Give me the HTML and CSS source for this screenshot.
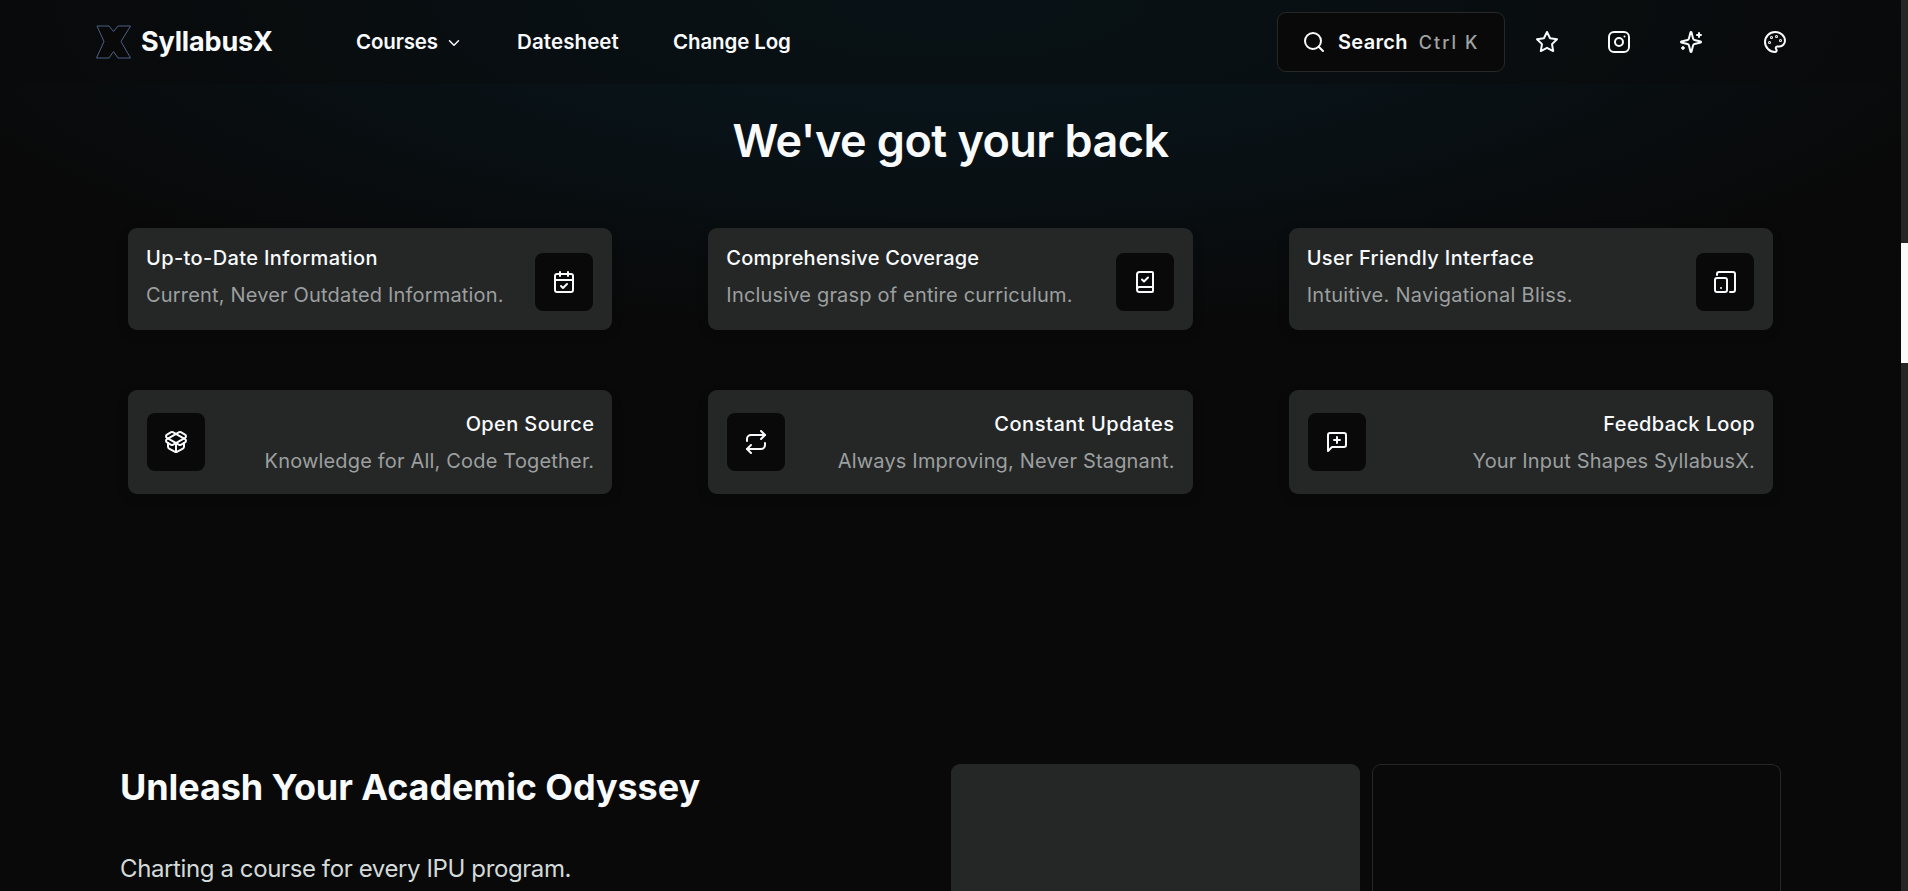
FILE: index.html
```
<!DOCTYPE html>
<html lang="en">
<head>
    <meta charset="UTF-8" />
    <title>SyllabusX</title>
    <link rel="stylesheet" href="styles.css">
</head>
<body>
    <header class="navbar">
        <a class="brand">
            <svg class="logo" viewBox="0 0 36 34"><path d="M1 1h12l4.500 5.500L22 1h12.500l-9.500 15.500L34.500 33H22l-4.500-6.500L13 33H.5L8 16.500z"/></svg>
            <span class="brand-name">SyllabusX</span>
        </a>
        <nav class="links">
            <a class="link courses"><span>Courses</span>
                <svg class="chevron" viewBox="0 0 24 24"><path d="m6 9 6 6 6-6"/></svg>
            </a>
            <a class="link datesheet">Datesheet</a>
            <a class="link change-log">Change Log</a>
        </nav>
        <div class="actions">
            <button class="search">
                <svg class="icon" viewBox="0 0 24 24"><circle cx="11" cy="11" r="8"/><path d="m21 21-4.300-4.300"/></svg>
                <span class="search-text">Search</span>
                <span class="shortcut">Ctrl K</span>
            </button>
            <svg class="icon star" viewBox="0 0 24 24"><path d="M12 2l3.090 6.260L22 9.270l-5 4.870 1.180 6.880L12 17.770l-6.180 3.250L7 14.140 2 9.270l6.910-1.010z"/></svg>
            <svg class="icon insta" viewBox="0 0 24 24"><rect x="2" y="2" width="20" height="20" rx="5"/><circle cx="12" cy="12" r="4"/><path d="M17.500 6.500h.01"/></svg>
            <svg class="icon sparkles" viewBox="0 0 24 24"><path d="M9.937 15.500A2 2 0 0 0 8.500 14.063l-6.135-1.582a.5.5 0 0 1 0-.962L8.500 9.936A2 2 0 0 0 9.937 8.500l1.582-6.135a.5.5 0 0 1 .963 0L14.063 8.500A2 2 0 0 0 15.500 9.937l6.135 1.581a.5.5 0 0 1 0 .964L15.500 14.063a2 2 0 0 0-1.437 1.437l-1.582 6.135a.5.5 0 0 1-.963 0z"/><path d="M20 3v4M22 5h-4M4 17v2M5 18H3"/></svg>
            <svg class="icon palette" viewBox="0 0 24 24"><circle cx="13.500" cy="6.500" r=".5"/><circle cx="17.500" cy="10.500" r=".5"/><circle cx="8.500" cy="7.500" r=".5"/><circle cx="6.500" cy="12.500" r=".5"/><path d="M12 2C6.500 2 2 6.500 2 12s4.500 10 10 10c.926 0 1.648-.746 1.648-1.688 0-.437-.18-.835-.437-1.125-.29-.289-.438-.652-.438-1.125a1.640 1.640 0 0 1 1.668-1.668h1.996c3.051 0 5.555-2.503 5.555-5.554C21.965 6.012 17.461 2 12 2z"/></svg>
        </div>
    </header>

    <main>
        <h1>We've got your back</h1>

        <section class="features">
            <div class="feature">
                <div class="text">
                    <h3>Up-to-Date Information</h3>
                    <p>Current, Never Outdated Information.</p>
                </div>
                <div class="icon-box"><svg class="icon" viewBox="0 0 24 24"><path d="M8 2v4M16 2v4"/><rect x="3" y="4" width="18" height="18" rx="2"/><path d="M3 10h18M9 16l2 2 4-4"/></svg></div>
            </div>
            <div class="feature coverage">
                <div class="text">
                    <h3>Comprehensive Coverage</h3>
                    <p>Inclusive grasp of entire curriculum.</p>
                </div>
                <div class="icon-box"><svg class="icon" viewBox="0 0 24 24"><path d="M4 19.500v-15A2.500 2.500 0 0 1 6.500 2H19a1 1 0 0 1 1 1v18a1 1 0 0 1-1 1H6.500a1 1 0 0 1 0-5H20"/><path d="m9 9.500 2 2 4-4"/></svg></div>
            </div>
            <div class="feature interface">
                <div class="text">
                    <h3>User Friendly Interface</h3>
                    <p>Intuitive. Navigational Bliss.</p>
                </div>
                <div class="icon-box"><svg class="icon" viewBox="0 0 24 24"><rect x="2" y="8" width="12" height="14" rx="2"/><path d="M4 5V4a2 2 0 0 1 2-2h14a2 2 0 0 1 2 2v16a2 2 0 0 1-2 2h-3M8 18h.01"/></svg></div>
            </div>

            <div class="feature flipped">
                <div class="icon-box"><svg class="icon" viewBox="0 0 24 24"><path d="M12 22v-9"/><path d="M15.170 2.210a1.670 1.670 0 0 1 1.630 0L21 4.570a1.930 1.930 0 0 1 0 3.360L8.820 14.790a1.655 1.655 0 0 1-1.640 0L3 12.430a1.930 1.930 0 0 1 0-3.360z"/><path d="M20 13v3.870a2.060 2.060 0 0 1-1.110 1.830l-6 3.080a1.930 1.930 0 0 1-1.780 0l-6-3.080A2.060 2.060 0 0 1 4 16.870V13"/><path d="M21 12.430a1.930 1.930 0 0 0 0-3.360L8.830 2.200a1.640 1.640 0 0 0-1.630 0L3 4.570a1.930 1.930 0 0 0 0 3.360l12.180 6.860a1.636 1.636 0 0 0 1.630 0z"/></svg></div>
                <div class="text">
                    <h3>Open Source</h3>
                    <p>Knowledge for All, Code Together.</p>
                </div>
            </div>
            <div class="feature flipped updates">
                <div class="icon-box"><svg class="icon" viewBox="0 0 24 24"><path d="m17 1 4 4-4 4"/><path d="M3 11V9a4 4 0 0 1 4-4h14M7 23l-4-4 4-4"/><path d="M21 13v2a4 4 0 0 1-4 4H3"/></svg></div>
                <div class="text">
                    <h3>Constant Updates</h3>
                    <p>Always Improving, Never Stagnant.</p>
                </div>
            </div>
            <div class="feature flipped">
                <div class="icon-box"><svg class="icon" viewBox="0 0 24 24"><path d="M21 15a2 2 0 0 1-2 2H7l-4 4V5a2 2 0 0 1 2-2h14a2 2 0 0 1 2 2zM12 7v6M9 10h6"/></svg></div>
                <div class="text">
                    <h3>Feedback Loop</h3>
                    <p>Your Input Shapes SyllabusX.</p>
                </div>
            </div>
        </section>

        <section class="odyssey">
            <div class="intro">
                <h2>Unleash Your Academic Odyssey</h2>
                <p>Charting a course for every IPU program.</p>
            </div>
            <div class="panels">
                <div class="panel filled"></div>
                <div class="panel"></div>
            </div>
        </section>
    </main>

    <div class="scrollbar"><div class="thumb"></div></div>
</body>
</html>
```

FILE: styles.css
```
* {
    box-sizing: border-box;
}

body {
    margin: 0;
    height: 891px;
    overflow: hidden;
    padding-right: 7px;
    position: relative;
    font-family: Inter, "Liberation Sans", sans-serif;
    color: #f8fafc;
    background: radial-gradient(ellipse 1080px 330px at 950px 0, #08181e, #08141a 30%, #090909) #090909;
}

h1, h2, h3, p {
    margin: 0;
}

.icon, .chevron {
    width: 24px;
    height: 24px;
    flex: none;
    fill: none;
    stroke: currentColor;
    stroke-width: 2;
    stroke-linecap: round;
    stroke-linejoin: round;
}

/* top bar */
.navbar {
    height: 84px;
    display: flex;
    align-items: center;
    padding: 0 114px 0 96px;
    background: rgba(9, 9, 9, 0.4);
}

.brand {
    display: flex;
    align-items: center;
    width: 260px;
}

.logo {
    width: 36px;
    height: 34px;
    fill: #090909;
    stroke: #4b6285;
    stroke-width: 1;
    margin-right: 9px;
}

.brand-name {
    padding-bottom: 2px;
    font-size: 27px;
    font-weight: 700;
    letter-spacing: -0.15px;
}

.links {
    display: flex;
    padding-bottom: 2px;
    font-size: 20.500px;
    font-weight: 600;
}

.link {
    display: flex;
    align-items: center;
    white-space: nowrap;
}

.courses {
    width: 161px;
    letter-spacing: -0.15px;
}

.datesheet {
    width: 156px;
    letter-spacing: 0.1px;
}

.change-log {
    letter-spacing: -0.12px;
}

.chevron {
    width: 18px;
    height: 18px;
    margin: 4px 0 0 7px;
}

.actions {
    display: flex;
    align-items: center;
    margin-left: auto;
}

.search {
    width: 228px;
    height: 60px;
    display: flex;
    align-items: center;
    padding: 0 0 0 24px;
    border: 1px solid #262828;
    border-radius: 9px;
    background: #090909;
    color: #f8fafc;
    font-family: inherit;
    font-size: 20px;
    font-weight: 600;
}

.search-text {
    margin-left: 12px;
    letter-spacing: 0.3px;
}

.shortcut {
    margin-left: 11px;
    font-size: 18px;
    font-weight: 500;
    letter-spacing: 2.100px;
    color: #a0a3a3;
}

.star {
    margin-left: 30px;
}

.insta, .sparkles {
    margin-left: 48px;
}

.palette {
    margin-left: 60px;
}

h1 {
    margin-top: 29px;
    text-align: center;
    font-size: 45px;
    line-height: 56px;
    font-weight: 600;
    letter-spacing: -0.55px;
}

/* feature cards */
.features {
    display: grid;
    grid-template-columns: repeat(3, 1fr);
    grid-template-rows: 102px 104px;
    gap: 60px 96px;
    margin: 59px 128px 0;
}

.feature {
    display: flex;
    justify-content: space-between;
    padding: 12px 19px 0 18px;
    border-radius: 9px;
    background: #252727;
    box-shadow: 0 4px 12px rgba(0, 0, 0, 0.15);
    white-space: nowrap;
}

.feature h3 {
    font-size: 20px;
    line-height: 37px;
    font-weight: 500;
    letter-spacing: 0.38px;
}

.feature p {
    font-size: 20px;
    line-height: 37px;
    letter-spacing: 0.18px;
    color: #9c9f9f;
}

.coverage h3 {
    letter-spacing: 0.22px;
}

.interface p {
    letter-spacing: 0.28px;
}

.updates h3 {
    letter-spacing: 0.52px;
}

.icon-box {
    width: 58px;
    height: 58px;
    display: flex;
    align-items: center;
    justify-content: center;
    margin-top: 13px;
    border-radius: 8px;
    background: #090909;
}

.flipped {
    padding: 16px 18px 0 19px;
    text-align: right;
}

.flipped .icon-box {
    margin-top: 7px;
}

/* academic odyssey */
.odyssey {
    display: flex;
    justify-content: space-between;
    margin: 270px 120px 0;
}

h2 {
    font-size: 36px;
    line-height: 46px;
    font-weight: 700;
    letter-spacing: -0.09px;
    white-space: nowrap;
}

.intro p {
    margin-top: 42px;
    font-size: 24px;
    line-height: 34px;
    letter-spacing: -0.39px;
    color: #d3dada;
    white-space: nowrap;
}

.panels {
    display: flex;
    gap: 12px;
}

.panel {
    width: 409px;
    height: 127px;
    border: 1px solid #252727;
    border-bottom: none;
    border-radius: 9px 9px 0 0;
}

.filled {
    background: #252727;
}

/* page scrollbar */
.scrollbar {
    position: absolute;
    top: 0;
    right: 0;
    width: 7px;
    height: 891px;
    background: #262626;
}

.thumb {
    height: 120px;
    position: relative;
    top: 243px;
    background: #fafafa;
}
```
